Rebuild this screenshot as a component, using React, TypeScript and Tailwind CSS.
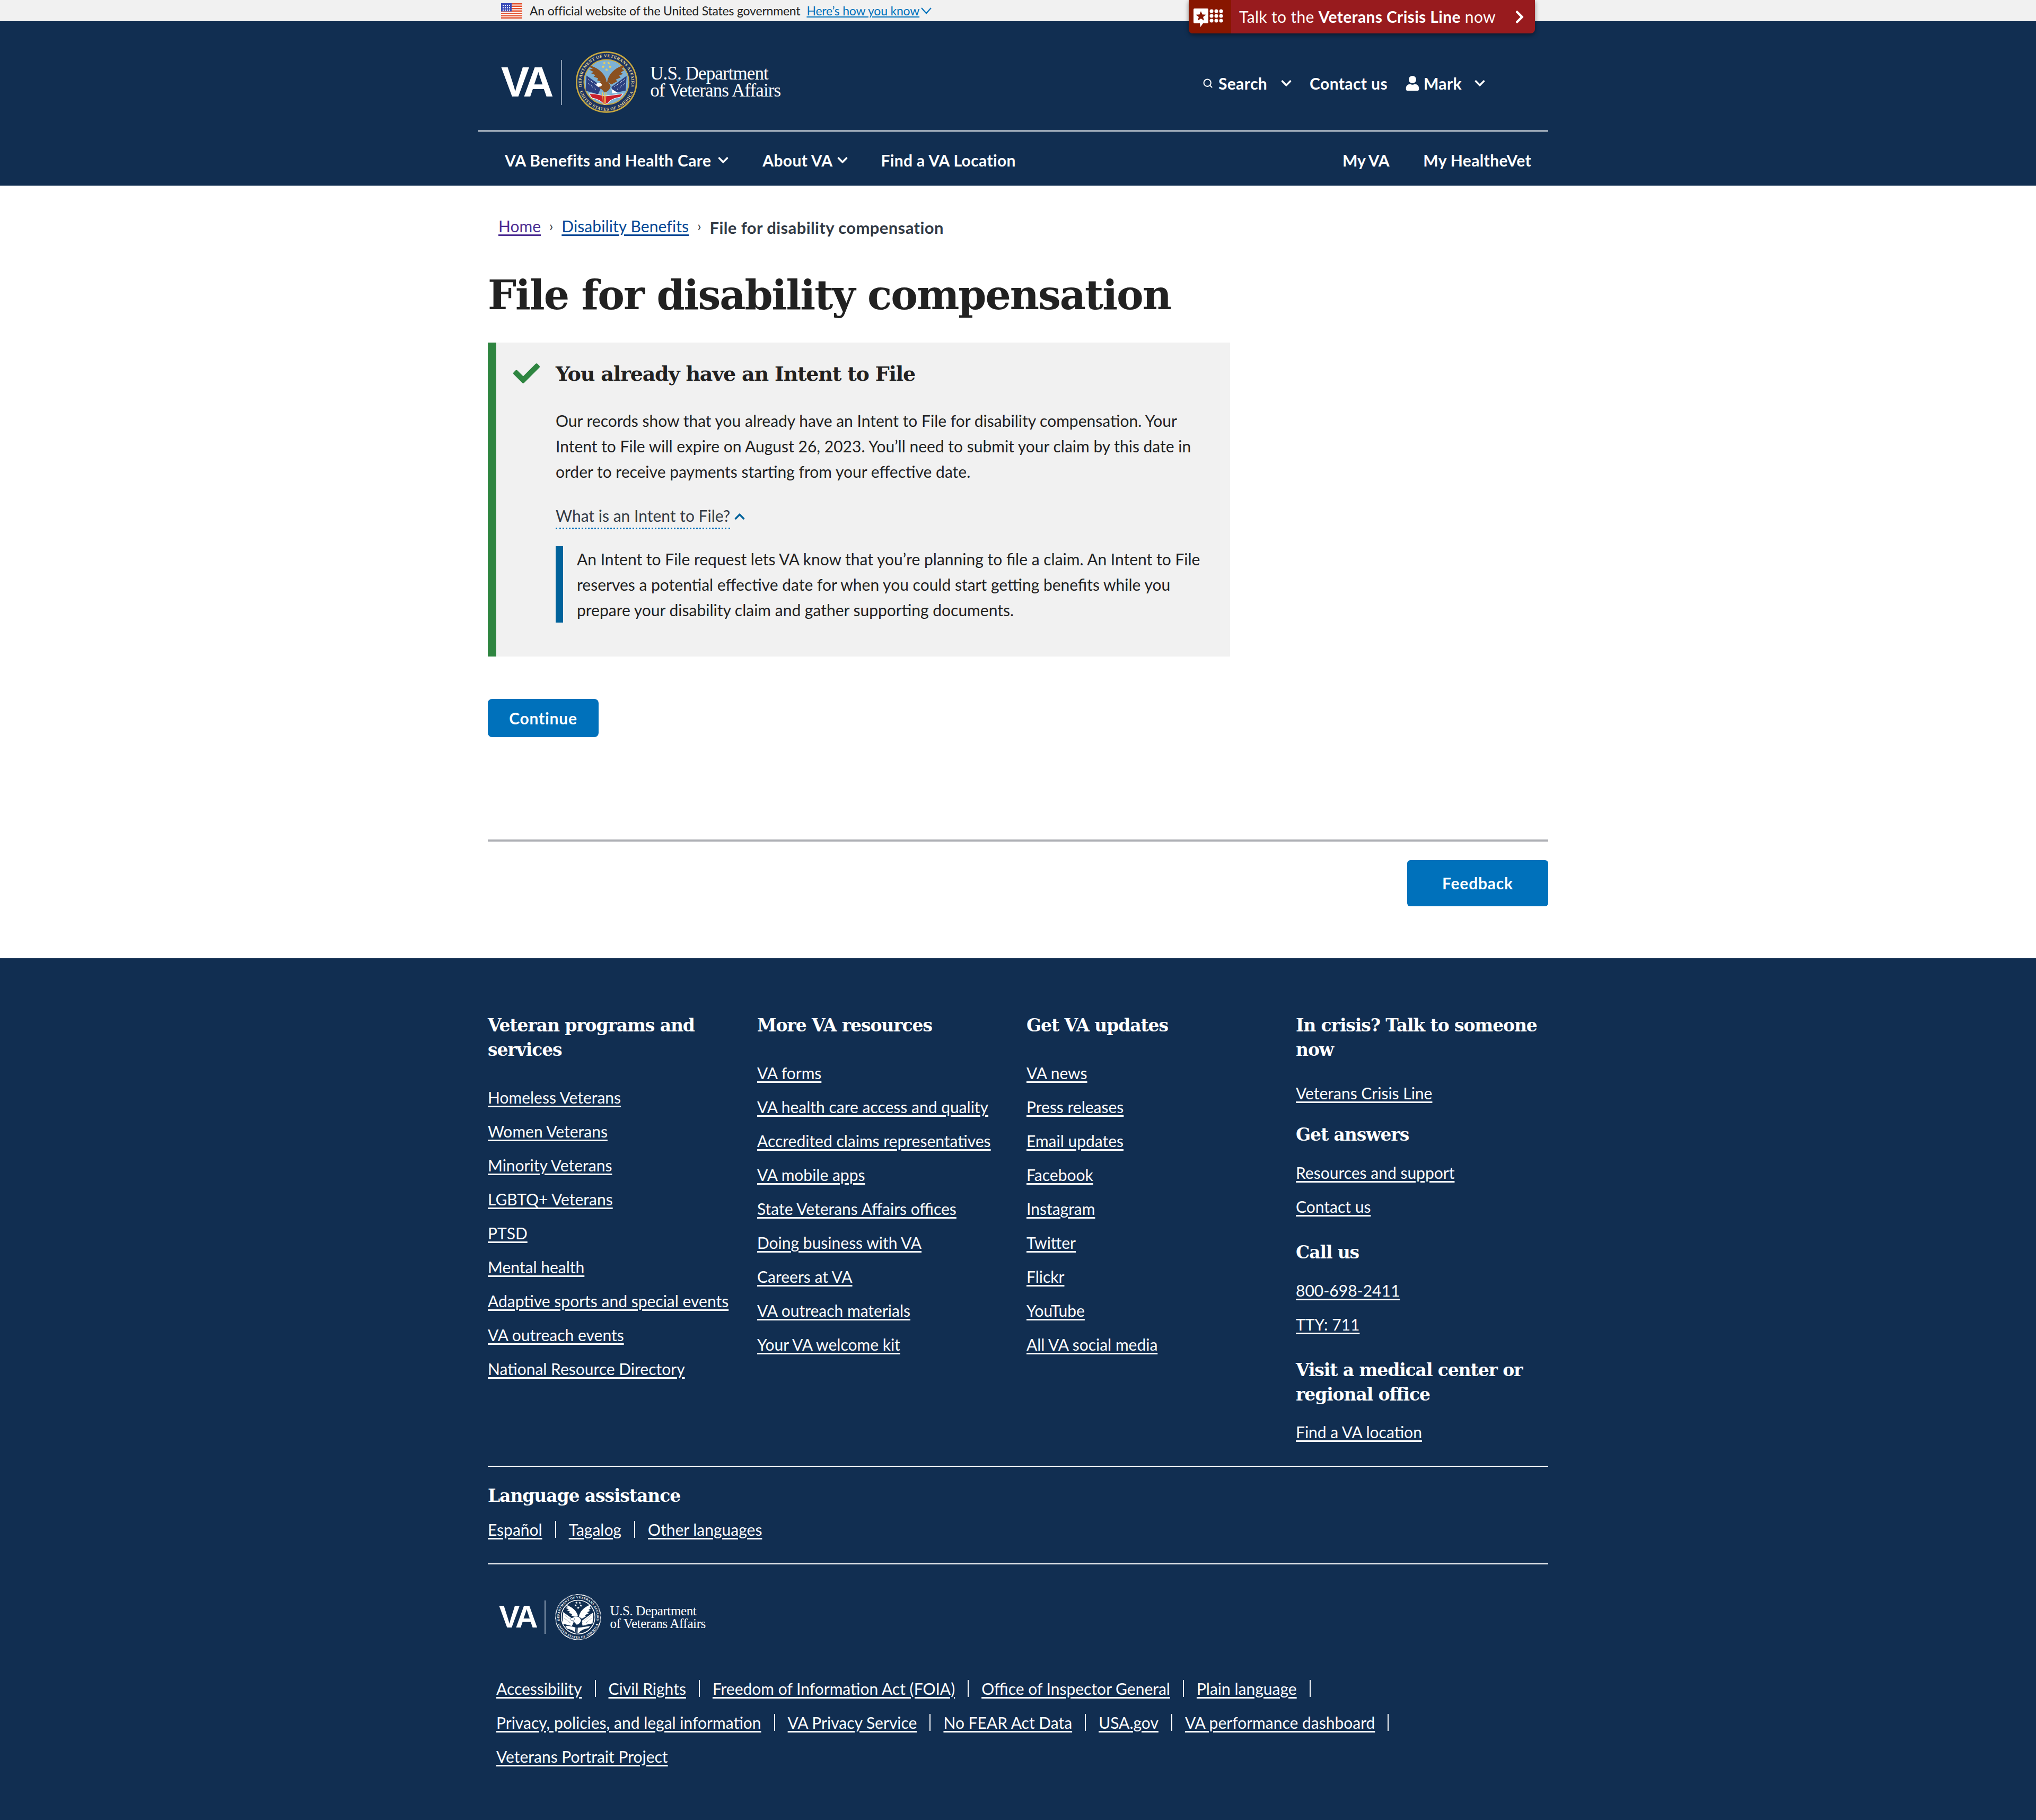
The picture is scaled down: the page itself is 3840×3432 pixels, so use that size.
import { Search } from 'lucide-react';
import { FaCheck, FaChevronDown, FaChevronRight, FaChevronUp, FaUser } from 'react-icons/fa';

const serif = "[font-family:'DejaVu_Serif',serif]";

const programs = [
    'Homeless Veterans',
    'Women Veterans',
    'Minority Veterans',
    'LGBTQ+ Veterans',
    'PTSD',
    'Mental health',
    'Adaptive sports and special events',
    'VA outreach events',
    'National Resource Directory',
];

const resources = [
    'VA forms',
    'VA health care access and quality',
    'Accredited claims representatives',
    'VA mobile apps',
    'State Veterans Affairs offices',
    'Doing business with VA',
    'Careers at VA',
    'VA outreach materials',
    'Your VA welcome kit',
];

const updates = ['VA news', 'Press releases', 'Email updates', 'Facebook', 'Instagram', 'Twitter', 'Flickr', 'YouTube', 'All VA social media'];

const bottomRows = [
    ['Accessibility', 'Civil Rights', 'Freedom of Information Act (FOIA)', 'Office of Inspector General', 'Plain language'],
    ['Privacy, policies, and legal information', 'VA Privacy Service', 'No FEAR Act Data', 'USA.gov', 'VA performance dashboard'],
    ['Veterans Portrait Project'],
];

function Flag() {
    return (
        <svg viewBox="0 0 40 29" className="h-[29px] w-[40px]">
            <rect width="40" height="29" fill="#fff" />
            {[0, 4.5, 9, 13.5, 18, 22.5, 26.5].map((y) => (
                <rect key={y} y={y} width="40" height="2.5" fill="#e3512f" />
            ))}
            <rect width="20" height="15.5" fill="#3b4cb8" />
            {[3, 7, 11, 15].flatMap((x) =>
                [3, 7.5, 12].map((y) => <rect key={`${x}-${y}`} x={x} y={y} width="2" height="2" fill="#fff" />),
            )}
        </svg>
    );
}

function CrisisIcon() {
    return (
        <svg viewBox="0 0 64 36" className="h-[36px] w-[64px]">
            <path d="M2 0h24a2 2 0 0 1 2 2v24a2 2 0 0 1-2 2h-8l-5 7-1-7H2a2 2 0 0 1-2-2V2a2 2 0 0 1 2-2z" fill="#fff" />
            <path d="M14 5l2.600 6.300 6.800.4-5.300 4.400 1.800 6.700-5.900-3.700-5.900 3.700 1.800-6.700-5.300-4.400 6.800-.4z" fill="#881600" />
            {[34, 43, 52].flatMap((x) => [5, 14, 23].map((y) => <circle key={`${x}-${y}`} cx={x} cy={y} r="3.500" fill="#fff" />))}
        </svg>
    );
}

// same drawing for both seals, the footer one is white on navy
function Seal({ mono, className }: { mono?: boolean; className: string }) {
    const ring = mono ? '#fff' : '#c9a93f';
    const band = mono ? '#112e51' : '#1d3461';
    const inner = mono ? '#112e51' : '#7db1d6';
    const wing = mono ? '#fff' : '#8a5020';
    const lettering = mono ? '#fff' : '#e6d694';
    const stripe = mono ? '#fff' : '#c8202c';
    const field = mono ? '#fff' : '#2b3f80';
    const star = mono ? '#fff' : '#f1cf52';
    const outline = mono ? '#112e51' : 'none';
    return (
        <svg viewBox="80 20 345 345" className={className}>
            <defs>
                <path id={mono ? 'topm' : 'topc'} d="M252 332a140 140 0 1 1 0-280a140 140 0 1 1 0 280" />
                <path id={mono ? 'botm' : 'botc'} d="M252 32a160 160 0 1 0 0 320a160 160 0 1 0 0-320" />
            </defs>
            <circle cx="252" cy="192" r="168" fill={band} stroke={ring} strokeWidth="8" strokeDasharray={mono ? '6 3' : undefined} />
            <text fontFamily="'Liberation Serif',serif" fontWeight="700" fontSize="24" fill={lettering} letterSpacing="1.500">
                <textPath href={mono ? '#topm' : '#topc'} startOffset="50%" textAnchor="middle">
                    DEPARTMENT OF VETERANS AFFAIRS
                </textPath>
            </text>
            <text fontFamily="'Liberation Serif',serif" fontWeight="700" fontSize="24" fill={lettering} letterSpacing="2">
                <textPath href={mono ? '#botm' : '#botc'} startOffset="50%" textAnchor="middle">
                    UNITED STATES OF AMERICA
                </textPath>
            </text>
            <circle cx="252" cy="192" r="126" fill={inner} stroke={ring} strokeWidth="6" />
            {[
                [240, 85],
                [265, 85],
                [233, 105],
                [272, 105],
                [253, 122],
            ].map(([x, y]) => (
                <path key={x} transform={`translate(${x} ${y})`} d="M0-9l2.600 6.300 6.800.4-5.300 4.400 1.800 6.700L0 4.100-5.900 7.800l1.800-6.700-5.300-4.400 6.800-.4z" fill={star} />
            ))}
            <path d="M140 155l85 60-20 45-70-20z" fill={field} />
            <path d="M365 157l-85 62 10 35 70-15z" fill={field} />
            <path d="M150 175l60 45M150 200l45 35M355 175l-60 45M355 200l-45 35" stroke={mono ? '#112e51' : '#fff'} strokeWidth="4" strokeDasharray="3 7" fill="none" />
            <path d="M252 185C245 150 215 118 165 100l-8 7 18 10-20 5 25 13-15 7 25 10-10 10 25 8-5 12 25 8z" fill={wing} stroke={outline} strokeWidth="3" />
            <path d="M256 190c6-40 39-75 89-92l7 7-14 13 14 7-20 13 13 8-23 10 10 10-27 12 7 10-32 17z" fill={wing} stroke={outline} strokeWidth="3" />
            <path d="M215 190c20-10 50-5 60 25-5 25-25 35-35 35-10-15-25-25-35-35z" fill={wing} stroke={outline} strokeWidth="3" />
            <ellipse cx="210" cy="207" rx="16" ry="11" fill="#fff" stroke={outline} strokeWidth="2" />
            <path d="M155 258c30-5 60 5 85 12 30 0 70-10 105-12l-15 18c-30 6-55 12-72 36l-20 5c-15-20-35-30-68-36z" fill={stripe} stroke={mono ? '#112e51' : '#fff'} strokeWidth="3" />
            <path d="M230 250l4 65M240 250v65M250 250l-4 60" stroke={mono ? '#112e51' : '#f1cf52'} strokeWidth="4" fill="none" />
            <path d="M280 230l35 22-30 4z" fill="#fff" />
        </svg>
    );
}

function FooterLink({ children }: { children: string }) {
    return (
        <a href="#" className="block h-[64px] leading-[64px] text-white underline underline-offset-[4px]">
            {children}
        </a>
    );
}

function FooterHeading({ children, className = '' }: { children: string; className?: string }) {
    return <h2 className={`${serif} text-[33px] leading-[46px] font-bold tracking-[-1.1px] text-white ${className}`}>{children}</h2>;
}

function LinkColumn({ title, links }: { title: string; links: string[] }) {
    return (
        <div>
            <FooterHeading className="mb-[34px]">{title}</FooterHeading>
            {links.map((link) => (
                <FooterLink key={link}>{link}</FooterLink>
            ))}
        </div>
    );
}

function Separator() {
    return <span className="mx-[24px] h-[32px] w-[2px] bg-white" />;
}

function App() {
    return (
        <div className="relative bg-white text-[30px] text-[#212121] [font-family:Lato,sans-serif]">
            <div className="flex h-[40px] items-center bg-[#f1f1f1] pl-[945px] text-[23px] tracking-[-0.2px]">
                <Flag />
                <span className="ml-[14px]">An official website of the United States government</span>
                <a href="#" className="ml-[12px] text-[#0071bb] underline underline-offset-[2px]">
                    Here’s how you know
                </a>
                <svg viewBox="0 0 20 14" className="ml-[3px] h-[14px] w-[20px]" fill="none" stroke="#0071bb" strokeWidth="2.200">
                    <path d="M1 2l9 10 9-10" />
                </svg>
            </div>

            <a
                href="#"
                className="absolute top-0 left-[2242px] flex h-[63px] w-[653px] items-center overflow-hidden rounded-b-[8px] bg-[#981b1e] text-white shadow-[0_3px_8px_rgba(0,0,0,0.45)]"
            >
                <span className="flex h-full w-[80px] items-start justify-center bg-[#881600] pt-[16px] pl-[2px]">
                    <CrisisIcon />
                </span>
                <span className="ml-[15px] text-[30px] tracking-[0.35px]">
                    Talk to the <strong>Veterans Crisis Line</strong> now
                </span>
                <FaChevronRight className="absolute right-[15px] text-[28px]" />
            </a>

            <header className="bg-[#112e51] text-white">
                <div className="mx-auto w-[2000px]">
                    <div className="-ml-[18px] w-[2018px]">
                        <div className="flex items-center pt-[57px] pr-[118px] pb-[33px] pl-[43px]">
                            <span className="[font-family:'Liberation_Sans',sans-serif] text-[80px] leading-[116px] font-bold tracking-[-6px]">VA</span>
                            <span className="mr-[26px] ml-[20px] h-[85px] w-[2px] bg-[#8a9bb0]" />
                            <Seal className="h-[116px] w-[116px]" />
                            <span className="ml-[24px] [font-family:'Liberation_Serif',serif] text-[35px] leading-[32px] tracking-[-0.9px]">
                                U.S. Department
                                <br />
                                of Veterans Affairs
                            </span>
                            <nav className="mt-[4px] ml-auto flex items-center text-[30px] font-bold tracking-[0.4px]">
                                <Search size={20} strokeWidth={2.5} />
                                <span className="ml-[10px]">Search</span>
                                <FaChevronDown className="ml-[25px] text-[22px]" />
                                <span className="ml-[33px]">Contact us</span>
                                <FaUser className="ml-[33px] text-[28px]" />
                                <span className="ml-[7px]">Mark</span>
                                <FaChevronDown className="ml-[23px] text-[22px]" />
                            </nav>
                        </div>
                        <div className="flex h-[104px] items-center border-t-2 border-white pt-[6px] pr-[32px] pl-[50px] text-[30px] font-bold tracking-[0.36px]">
                            <span>VA Benefits and Health Care</span>
                            <FaChevronDown className="ml-[12px] text-[22px]" />
                            <span className="ml-[63px]">About VA</span>
                            <FaChevronDown className="ml-[8px] text-[22px]" />
                            <span className="ml-[61px]">Find a VA Location</span>
                            <span className="ml-auto tracking-[-0.2px]">My VA</span>
                            <span className="ml-[64px]">My HealtheVet</span>
                        </div>
                    </div>
                </div>
            </header>

            <main className="mx-auto w-[2000px] pb-[98px]">
                <nav className="mt-[57px] flex h-[38px] items-center pl-[20px] text-[30px] leading-[38px]">
                    <a href="#" className="text-[#4c2c92] underline underline-offset-[4px]">
                        Home
                    </a>
                    <span className="mx-[16px] text-[26px] text-[#323a45]">›</span>
                    <a href="#" className="tracking-[0.1px] text-[#004795] underline underline-offset-[4px]">
                        Disability Benefits
                    </a>
                    <span className="mx-[16px] text-[26px] text-[#323a45]">›</span>
                    <span className="mt-[6px] text-[31px] font-bold tracking-[0.4px] text-[#323a45]">File for disability compensation</span>
                </nav>
                <h1 className={`${serif} mt-[67px] text-[76px] leading-[90px] font-bold tracking-[-2px]`}>File for disability compensation</h1>

                <section className="relative mt-[44px] w-[1400px] border-l-[16px] border-[#2e8540] bg-[#f1f1f1] pt-[36px] pr-[40px] pb-[64px] pl-[112px]">
                    <FaCheck className="absolute top-[33px] left-[32px] text-[50px] text-[#2e8540]" />
                    <h2 className={`${serif} text-[38px] leading-[46px] font-bold tracking-[-1.2px]`}>You already have an Intent to File</h2>
                    <p className="mt-[41px] leading-[48px]">
                        Our records show that you already have an Intent to File for disability compensation. Your
                        <br />
                        Intent to File will expire on August 26, 2023. You’ll need to submit your claim by this date in
                        <br />
                        order to receive payments starting from your effective date.
                    </p>
                    <div className="mt-[36px] flex items-start">
                        <span className="border-b-[3px] border-dotted border-[#0071bb] leading-[46px] text-[#323a45]">What is an Intent to File?</span>
                        <FaChevronUp className="mt-[14px] ml-[7px] text-[22px] text-[#00629b]" />
                    </div>
                    <div className="mt-[32px] border-l-[14px] border-[#00629b] pl-[26px] leading-[48px]">
                        An Intent to File request lets VA know that you’re planning to file a claim. An Intent to File
                        <br />
                        reserves a potential effective date for when you could start getting benefits while you
                        <br />
                        prepare your disability claim and gather supporting documents.
                    </div>
                </section>

                <button className="mt-[80px] block h-[72px] w-[209px] rounded-[8px] bg-[#0071bb] font-bold tracking-[0.8px] text-white">Continue</button>
                <div className="mt-[193px] h-[4px] bg-[#aeb0b5]" />
                <div className="mt-[35px] flex justify-end">
                    <button className="h-[87px] w-[266px] rounded-[6px] bg-[#0071bb] font-bold tracking-[0.8px] text-white">Feedback</button>
                </div>
            </main>

            <footer className="bg-[#112e51] pt-[104px] pb-[88px] text-white">
                <div className="mx-auto w-[2000px]">
                    <div className="grid grid-cols-[508px_508px_508px_476px]">
                        <LinkColumn title="Veteran programs and services" links={programs} />
                        <LinkColumn title="More VA resources" links={resources} />
                        <LinkColumn title="Get VA updates" links={updates} />
                        <div>
                            <FooterHeading className="mb-[26px]">In crisis? Talk to someone now</FooterHeading>
                            <FooterLink>Veterans Crisis Line</FooterLink>
                            <FooterHeading className="mt-[24px] mb-[16px]">Get answers</FooterHeading>
                            <FooterLink>Resources and support</FooterLink>
                            <FooterLink>Contact us</FooterLink>
                            <FooterHeading className="mt-[32px] mb-[16px]">Call us</FooterHeading>
                            <FooterLink>800-698-2411</FooterLink>
                            <FooterLink>TTY: 711</FooterLink>
                            <FooterHeading className="mt-[32px] mb-[15px]">Visit a medical center or regional office</FooterHeading>
                            <FooterLink>Find a VA location</FooterLink>
                        </div>
                    </div>

                    <div className="mt-[32px] border-t-2 border-white pt-[32px]">
                        <FooterHeading>Language assistance</FooterHeading>
                        <div className="mt-[8px] flex h-[64px] items-center">
                            <a href="#" className="underline underline-offset-[4px]">
                                Español
                            </a>
                            <Separator />
                            <a href="#" className="underline underline-offset-[4px]">
                                Tagalog
                            </a>
                            <Separator />
                            <a href="#" className="underline underline-offset-[4px]">
                                Other languages
                            </a>
                        </div>
                    </div>

                    <div className="mt-[32px] border-t-2 border-white pt-[56px]">
                        <div className="flex items-center pl-[21px]">
                            <span className="[font-family:'Liberation_Sans',sans-serif] text-[59px] leading-[87px] font-bold tracking-[-4px]">VA</span>
                            <span className="mr-[18px] ml-[16px] h-[63px] w-[2px] bg-[#8a9bb0]" />
                            <Seal mono className="h-[87px] w-[87px]" />
                            <span className="ml-[17px] [font-family:'Liberation_Serif',serif] text-[25px] leading-[24px] tracking-[-0.4px]">
                                U.S. Department
                                <br />
                                of Veterans Affairs
                            </span>
                        </div>
                        <div className="mt-[59px] pl-[16px]">
                            {bottomRows.map((row) => (
                                <div key={row[0]} className="flex h-[64px] items-center">
                                    {row.map((link) => (
                                        <span key={link} className="flex items-center">
                                            <a href="#" className="underline underline-offset-[4px]">
                                                {link}
                                            </a>
                                            {row.length > 1 && <Separator />}
                                        </span>
                                    ))}
                                </div>
                            ))}
                        </div>
                    </div>
                </div>
            </footer>
        </div>
    );
}

export default App;
